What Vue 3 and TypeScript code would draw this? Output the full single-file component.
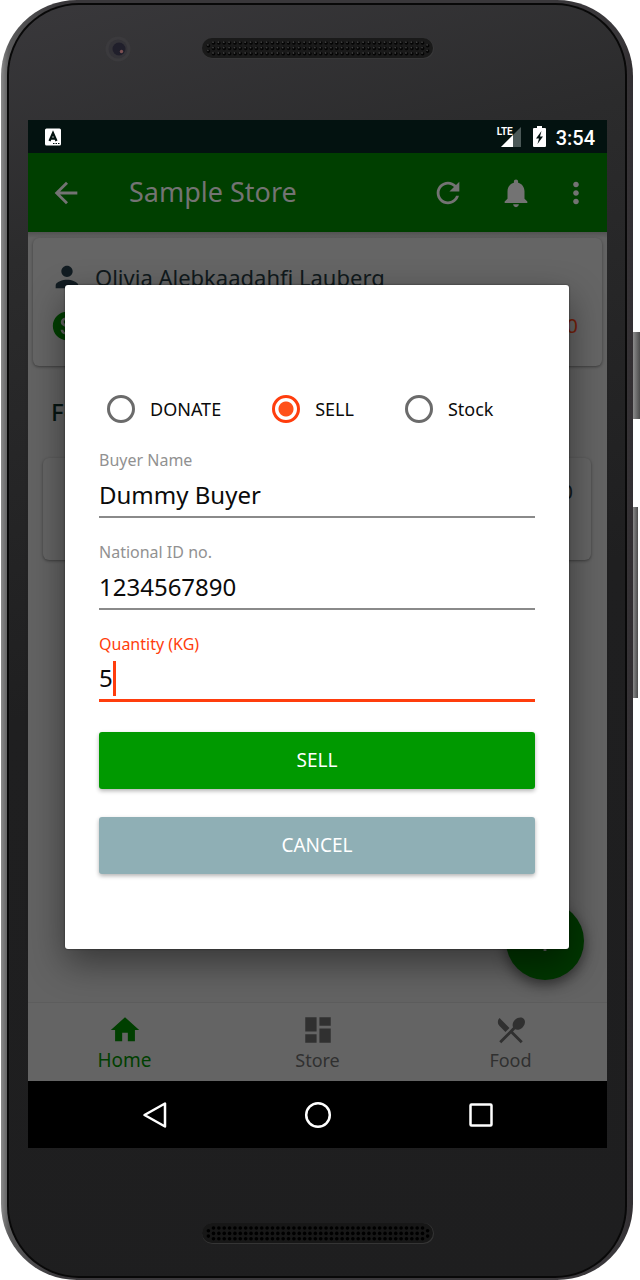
<script setup lang="ts">
import { ref } from 'vue'

type Mode = 'donate' | 'sell' | 'stock'

const modes: { value: Mode; label: string }[] = [
  { value: 'donate', label: 'DONATE' },
  { value: 'sell', label: 'SELL' },
  { value: 'stock', label: 'Stock' },
]

const mode = ref<Mode>('sell')
const buyer = ref('Dummy Buyer')
const nationalId = ref('1234567890')
const quantity = ref('5')

// Speaker grille: three rows of holes with a pair of holes at each end.
const holes: { x: number; y: number }[] = []
for (let col = 0; col < 40; col++) {
  for (let row = 0; row < 3; row++) {
    holes.push({ x: 11.5 + col * 5.36, y: 5 + row * 5.4 })
  }
}
for (const x of [6.4, 225.6]) holes.push({ x, y: 7.7 }, { x, y: 13.1 })
</script>

<template>
  <div class="stage">
    <div class="phone">
      <span class="side power"></span>
      <span class="side volume"></span>
      <div class="rim">
        <div class="face">
          <header class="forehead">
            <svg class="camera" viewBox="0 0 26 26" aria-hidden="true">
              <circle cx="13" cy="13" r="12.5" fill="#3b3a3d" />
              <circle cx="13" cy="13" r="9.5" fill="#343338" />
              <circle cx="14" cy="13" r="6.5" fill="#201f2b" />
              <circle cx="16.500" cy="15.500" r="1.700" fill="#7d5052" />
            </svg>
            <svg class="speaker" viewBox="0 0 232 21" aria-hidden="true">
              <rect width="232" height="21" rx="10.500" fill="#383839" />
              <rect width="231" height="20" rx="10" fill="#1a1a1a" />
              <g v-for="(h, i) in holes" :key="i">
                <circle :cx="h.x" :cy="h.y" r="1.800" fill="#050505" />
                <circle :cx="h.x - 0.5" :cy="h.y - 0.8" r="0.900" fill="#3e3e3e" />
              </g>
            </svg>
          </header>

          <div class="screen">
            <div class="status">
              <svg class="debug" viewBox="0 0 16 18" aria-hidden="true">
                <rect y="0.500" width="16" height="17" rx="1.500" fill="#fff" />
                <path d="M4.500 13 8 5 11.500 13M6 10.700h4" fill="none" stroke="#031210" stroke-width="2.200" />
                <path d="M8 15.500h7" stroke="#031210" stroke-dasharray="1.500 1" />
              </svg>
              <span class="network">
                <span class="lte">LTE</span>
                <svg class="signal" viewBox="0 0 20 20" aria-hidden="true">
                  <path d="M0 20 20 0V20z" fill="#4c5958" />
                  <path d="M0 20 12 8V20z" fill="#fff" />
                </svg>
              </span>
              <svg class="battery" viewBox="0 0 13 21" aria-hidden="true">
                <path d="M4 0h5v2h3q1 0 1 1v17q0 1-1 1H1q-1 0-1-1V3q0-1 1-1h3z" fill="#fff" />
                <path d="M8.500 5 3 12.500h3L4.500 18 10 10.500H7z" fill="#031210" />
              </svg>
              <time class="clock">3:54</time>
            </div>

            <div class="app">
              <nav class="toolbar">
                <button class="icon-btn" aria-label="Back">
                  <svg viewBox="0 0 24 24"><path d="M20 11H7.830l5.590-5.590L12 4l-8 8 8 8 1.410-1.410L7.830 13H20v-2z" /></svg>
                </button>
                <h1 class="title">Sample Store</h1>
                <button class="icon-btn" aria-label="Refresh">
                  <svg viewBox="0 0 24 24"><path d="M17.650 6.350C16.200 4.900 14.210 4 12 4c-4.420 0-7.990 3.580-7.990 8s3.570 8 7.990 8c3.730 0 6.840-2.550 7.730-6h-2.080c-.82 2.330-3.040 4-5.650 4-3.310 0-6-2.690-6-6s2.690-6 6-6c1.660 0 3.140.69 4.220 1.780L13 11h7V4l-2.350 2.350z" /></svg>
                </button>
                <button class="icon-btn bell" aria-label="Notifications">
                  <svg viewBox="0 0 24 24"><path d="M12 22c1.100 0 2-.9 2-2h-4c0 1.100.89 2 2 2zm6-6v-5c0-3.070-1.640-5.640-4.500-6.320V4c0-.83-.67-1.500-1.500-1.500s-1.500.67-1.500 1.500v.68C7.630 5.360 6 7.920 6 11v5l-2 2v1h16v-1l-2-2z" /></svg>
                </button>
                <button class="icon-btn more" aria-label="More options">
                  <svg viewBox="0 0 24 24"><path d="M12 8c1.100 0 2-.9 2-2s-.9-2-2-2-2 .9-2 2 .9 2 2 2zm0 2c-1.100 0-2 .9-2 2s.9 2 2 2 2-.9 2-2-.9-2-2-2zm0 6c-1.100 0-2 .9-2 2s.9 2 2 2 2-.9 2-2-.9-2-2-2z" /></svg>
                </button>
              </nav>

              <main class="content">
                <section class="card owner">
                  <div class="line">
                    <svg class="person" viewBox="0 0 24 24" aria-hidden="true"><path d="M12 12c2.210 0 4-1.790 4-4s-1.790-4-4-4-4 1.790-4 4 1.790 4 4 4zm0 2c-2.670 0-8 1.340-8 4v2h16v-2c0-2.660-5.330-4-8-4z" /></svg>
                    <span>Olivia Alebkaadahfi Lauberg</span>
                  </div>
                  <div class="line">
                    <svg class="coin" viewBox="0 0 24 24" aria-hidden="true"><path d="M12 2C6.480 2 2 6.480 2 12s4.480 10 10 10 10-4.480 10-10S17.520 2 12 2zm1.410 16.090V20h-2.670v-1.930c-1.710-.36-3.160-1.460-3.270-3.400h1.960c.1 1.050.82 1.870 2.650 1.870 1.960 0 2.400-.98 2.400-1.590 0-.83-.44-1.610-2.670-2.140-2.480-.6-4.180-1.620-4.180-3.670 0-1.720 1.390-2.840 3.110-3.210V4h2.670v1.950c1.860.45 2.790 1.860 2.850 3.390H14.300c-.05-1.110-.64-1.870-2.220-1.870-1.500 0-2.400.68-2.400 1.640 0 .84.65 1.390 2.670 1.910s4.180 1.390 4.180 3.910c-.01 1.830-1.380 2.830-3.120 3.160z" /></svg>
                    <span class="amount">0</span>
                  </div>
                </section>
                <h2 class="section">Food</h2>
                <section class="card item"><span>0</span></section>
              </main>

              <button class="fab" aria-label="Add">
                <svg viewBox="0 0 24 24"><path d="M19 13h-6v6h-2v-6H5v-2h6V5h2v6h6v2z" /></svg>
              </button>

              <nav class="tabs">
                <a class="tab active" href="#home">
                  <svg viewBox="0 0 24 24"><path d="M10 20v-6h4v6h5v-8h3L12 3 2 12h3v8z" /></svg>
                  Home
                </a>
                <a class="tab" href="#store">
                  <svg viewBox="0 0 24 24"><path d="M3 13h8V3H3v10zm0 8h8v-6H3v6zm10 0h8V11h-8v10zm0-18v6h8V3h-8z" /></svg>
                  Store
                </a>
                <a class="tab" href="#food">
                  <svg viewBox="0 0 24 24"><path d="M8.100 13.340l2.830-2.830L3.910 3.500c-1.560 1.560-1.560 4.090 0 5.660l4.190 4.180zm6.780-1.810c1.530.71 3.680.21 5.270-1.380 1.910-1.910 2.280-4.650.81-6.120-1.460-1.460-4.200-1.100-6.120.81-1.590 1.590-2.090 3.740-1.380 5.270L3.700 19.870l1.410 1.410L12 14.410l6.880 6.880 1.410-1.410L13.410 13l1.470-1.470z" /></svg>
                  Food
                </a>
              </nav>

              <div class="overlay">
                <form class="dialog" role="dialog" aria-label="Transaction" @submit.prevent>
                  <div class="modes">
                    <label v-for="m in modes" :key="m.value" class="mode">
                      <input v-model="mode" type="radio" name="mode" :value="m.value" />
                      {{ m.label }}
                    </label>
                  </div>
                  <div class="field">
                    <label for="buyer">Buyer Name</label>
                    <input id="buyer" v-model="buyer" type="text" />
                  </div>
                  <div class="field">
                    <label for="nid">National ID no.</label>
                    <input id="nid" v-model="nationalId" type="text" inputmode="numeric" />
                  </div>
                  <div class="field current">
                    <label for="qty">Quantity (KG)</label>
                    <input id="qty" v-model="quantity" type="text" inputmode="decimal" />
                    <span class="caret"></span>
                  </div>
                  <div class="actions">
                    <button type="submit" class="action">SELL</button>
                    <button type="button" class="action cancel">CANCEL</button>
                  </div>
                </form>
              </div>
            </div>

            <div class="softkeys">
              <button aria-label="System back">
                <svg viewBox="0 0 28 28"><path d="M24 2.500v23L3.500 14z" /></svg>
              </button>
              <button aria-label="System home">
                <svg viewBox="0 0 28 28"><circle cx="14" cy="14" r="11.800" /></svg>
              </button>
              <button aria-label="Recent apps">
                <svg viewBox="0 0 28 28"><rect x="3.500" y="3.500" width="21" height="21" rx="1" /></svg>
              </button>
            </div>
          </div>

          <footer class="chin">
            <svg class="speaker" viewBox="0 0 232 21" aria-hidden="true">
              <rect width="232" height="21" rx="10.500" fill="#353535" />
              <rect width="231" height="20" rx="10" fill="#171717" />
              <circle v-for="(h, i) in holes" :key="i" :cx="h.x" :cy="h.y" r="1.800" fill="#000" />
            </svg>
          </footer>
        </div>
      </div>
    </div>
  </div>
</template>

<style>
body {
  margin: 0;
  background: #fff;
}
</style>

<style scoped>
* {
  box-sizing: border-box;
}
button,
input {
  font: inherit;
  color: inherit;
  margin: 0;
  padding: 0;
  border: 0;
  background: none;
}
svg {
  display: block;
}
.stage {
  display: flex;
  min-height: 100vh;
  padding: 0 7px 0 1px;
  font-family: "Noto Sans", "Open Sans", sans-serif;
  font-size: 19px;
}
.phone {
  position: relative;
  flex: 1;
  display: flex;
  padding: 3px 6px 2px;
  border-radius: 76px;
  background: linear-gradient(90deg, #8a8a8a 0, #5a5a5b 8px, #39373a 60px, #39373a 620px, #322e31 100%);
}
.side {
  position: absolute;
  left: 100%;
  background: linear-gradient(90deg, #8b8b8b, #4c4c4c);
}
.power {
  top: 332px;
  width: 7px;
  height: 87px;
}
.volume {
  top: 507px;
  width: 5px;
  height: 191px;
}
.rim {
  flex: 1;
  display: flex;
  padding: 2px;
  border-radius: 72px;
  background: #080808;
}
.face {
  flex: 1;
  display: flex;
  flex-direction: column;
  padding: 0 18px 0 19px;
  border-radius: 70px;
  background: linear-gradient(165deg, #39383b 0, #2b2b2c 18%, #1f1f20 50%, #1e1e1f 100%);
}
.forehead {
  display: grid;
  grid-template-columns: 1fr auto 1fr;
  align-items: center;
  height: 115px;
  padding-bottom: 28px;
}
.camera {
  width: 26px;
  height: 26px;
  margin-left: 77px;
}
.speaker {
  width: 232px;
  height: 21px;
}
.screen {
  flex: 1;
  display: flex;
  flex-direction: column;
  background: #636363;
}
.status {
  display: flex;
  align-items: center;
  height: 33px;
  padding: 0 12px 0 17px;
  background: #031210;
  color: #fff;
}
.debug {
  width: 16px;
  height: 18px;
  margin-right: auto;
}
.network {
  position: relative;
  width: 24px;
  height: 20px;
  margin-right: 12px;
}
.lte {
  position: absolute;
  left: 0;
  top: 0;
  font: 700 10px/10px "Liberation Sans Narrow", Roboto, sans-serif;
}
.signal {
  width: 20px;
  height: 20px;
  margin-left: 4px;
}
.battery {
  width: 13px;
  height: 21px;
  margin-right: 10px;
}
.clock {
  padding-top: 2px;
  font: 500 20px/32px Roboto, sans-serif;
}
.app {
  position: relative;
  flex: 1;
  display: flex;
  flex-direction: column;
}
.toolbar {
  display: flex;
  align-items: center;
  height: 79px;
  padding: 0 14px 0 21px;
  background: #003f00;
  color: #737373;
}
.icon-btn svg {
  width: 34px;
  height: 34px;
  fill: #737373;
}
.title {
  flex: 1;
  margin: 0 0 0 46px;
  padding-bottom: 2px;
  font-size: 27px;
  line-height: 40px;
  font-weight: 400;
}
.bell {
  margin-left: 34px;
}
.more {
  margin-left: 26px;
}
.content {
  flex: 1;
  padding: 6px 5px 0;
  background: linear-gradient(#525252, #636363 6px);
  color: #10191c;
}
.card {
  border-radius: 6px;
  background: #656565;
  box-shadow: 0 1px 3px rgba(0, 0, 0, 0.4);
}
.owner {
  height: 128px;
  padding: 14px 24px 0 17px;
}
.line {
  display: flex;
  align-items: center;
  gap: 11px;
  height: 49px;
  font-size: 22px;
}
.person,
.coin {
  width: 34px;
  height: 34px;
  fill: #121c22;
}
.coin {
  fill: #003f00;
}
.amount {
  margin-left: auto;
  font-size: 20px;
  color: #75200a;
}
.section {
  margin: 30px 18px;
  font-size: 24px;
  line-height: 32px;
  font-weight: 500;
  color: #061512;
}
.item {
  height: 102px;
  margin: 0 11px 0 10px;
  padding: 20px 18px;
  font-size: 20px;
  line-height: 28px;
  text-align: right;
}
.fab {
  position: absolute;
  right: 23px;
  bottom: 101px;
  width: 78px;
  height: 78px;
  padding: 22px;
  border-radius: 50%;
  background: #003700;
  box-shadow: 0 5px 14px rgba(0, 0, 0, 0.5);
}
.fab svg {
  fill: #666;
}
.tabs {
  display: flex;
  height: 79px;
  border-top: 1px solid #5d5d5d;
  background: #646464;
}
.tab {
  flex: 1;
  display: flex;
  flex-direction: column;
  align-items: center;
  padding-top: 10px;
  line-height: 26px;
  font-size: 18px;
  color: #303030;
  text-decoration: none;
}
.tab svg {
  width: 34px;
  height: 34px;
  fill: currentColor;
}
.tab.active {
  font-size: 19px;
  color: #003f00;
}
.overlay {
  position: absolute;
  inset: 0;
  display: grid;
  align-items: center;
  padding: 0 38px 0 37px;
}
.dialog {
  padding: 100px 34px 75px;
  border-radius: 3px;
  background: #fff;
  color: #0b0b0b;
  box-shadow: 0 14px 36px rgba(0, 0, 0, 0.45), 0 0 2px rgba(0, 0, 0, 0.6);
}
.modes {
  display: flex;
  gap: 51px;
  height: 48px;
  margin-bottom: 15px;
  padding-left: 8px;
}
.mode {
  display: flex;
  align-items: center;
  gap: 15px;
  font-size: 18px;
}
.mode input {
  appearance: none;
  width: 28px;
  height: 28px;
  border: 3px solid #6b6b6b;
  border-radius: 50%;
}
.mode input:checked {
  border-color: #ff3d0d;
  background: radial-gradient(circle, #ff5019 7px, transparent 8px);
}
.field {
  position: relative;
  display: flex;
  flex-direction: column;
  margin-bottom: 22px;
}
.field label {
  font-size: 16px;
  line-height: 24px;
  color: #919191;
}
.field input {
  width: 100%;
  height: 46px;
  border-bottom: 2px solid #8a8a8a;
  font-size: 24px;
}
.field.current label {
  color: #ff3d0d;
}
.field.current input {
  border-bottom: 3px solid #ff3d0d;
}
.caret {
  position: absolute;
  left: 14px;
  bottom: 6px;
  width: 3px;
  height: 35px;
  background: #ff3d0d;
}
.actions {
  display: grid;
  gap: 28px;
  padding-top: 8px;
}
.action {
  height: 57px;
  padding-bottom: 2px;
  border-radius: 3px;
  background: #009900;
  color: #fff;
  font-size: 19px;
  box-shadow: 0 2px 4px rgba(0, 0, 0, 0.3);
}
.cancel {
  background: #8fafb5;
}
.softkeys {
  display: flex;
  justify-content: center;
  align-items: center;
  gap: 135px;
  height: 67px;
  background: #000;
}
.softkeys svg {
  width: 28px;
  height: 28px;
  fill: none;
  stroke: #fff;
  stroke-width: 2.5;
  stroke-linejoin: round;
}
.chin {
  display: flex;
  justify-content: center;
  align-items: center;
  height: 128px;
  padding-top: 42px;
}
</style>
